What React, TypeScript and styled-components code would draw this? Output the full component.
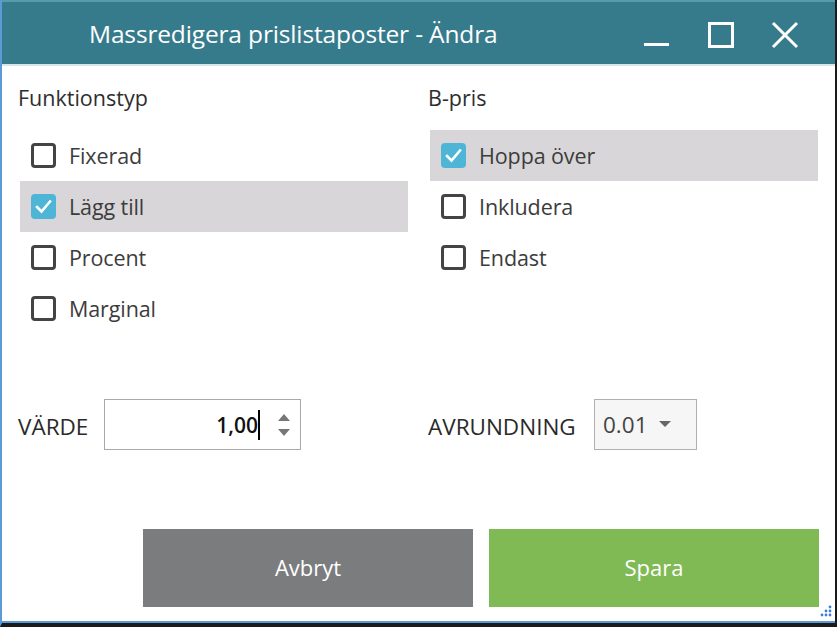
import React from "react";
import styled, { createGlobalStyle } from "styled-components";

const Global = createGlobalStyle`
  html, body { margin: 0; padding: 0; background: #ffffff; }
  body { font-family: "Open Sans", "Noto Sans", sans-serif; }
  * { box-sizing: border-box; }
`;

const Window = styled.div`
  position: relative;
  width: 837px;
  height: 627px;
  display: flex;
  flex-direction: column;
  background: #ffffff;
  border-left: 2px solid #5a9ad6;
  border-right: 2px solid #1b1b1b;
  border-bottom: 4px solid #1b1b1b;
  box-shadow: inset 0 -2px 0 #5a9ad6;
  overflow: hidden;
`;

const TitleBar = styled.div`
  height: 66px;
  flex: 0 0 66px;
  background: #367b8c;
  border-top: 2px solid #5a9ab0;
  border-bottom: 2px solid #d6e6ea;
  display: flex;
  align-items: center;
  padding-left: 87px;
  padding-right: 36px;
  color: #ffffff;
`;

const Title = styled.div`
  flex: 1;
  font-family: "Open Sans", sans-serif;
  font-size: 24.5px;
  font-weight: 400;
  letter-spacing: -0.15px;
`;

const Controls = styled.div`
  display: flex;
  align-items: center;
  gap: 36px;
  margin-top: 3px;
`;

const CtrlIcon = styled.svg`
  width: 28px;
  height: 28px;
  display: block;
`;

const Body = styled.div`
  flex: 1;
  display: flex;
  flex-direction: column;
  padding: 19px 16px 0 16px;
`;

const Columns = styled.div`
  display: grid;
  grid-template-columns: 390px 390px;
  column-gap: 20px;
`;

const Column = styled.div`
  display: flex;
  flex-direction: column;
`;

const Heading = styled.div`
  font-size: 21.5px;
  line-height: 26px;
  color: #2e2e2e;
  margin-bottom: 19px;
`;

const List = styled.div`
  display: flex;
  flex-direction: column;
  margin-left: 2px;
`;

const Row = styled.div<{ $active?: boolean }>`
  height: 51px;
  display: flex;
  align-items: center;
  gap: 13px;
  padding-left: 11px;
  background: ${(p) => (p.$active ? "#d8d6d8" : "transparent")};
`;

const Box = styled.div<{ $checked?: boolean }>`
  width: 25px;
  height: 25px;
  border-radius: 4px;
  border: ${(p) => (p.$checked ? "none" : "3px solid #444444")};
  background: ${(p) => (p.$checked ? "#4eb5d6" : "#ffffff")};
  display: flex;
  align-items: center;
  justify-content: center;
`;

const Label = styled.span`
  font-size: 21.5px;
  color: #3c3c3c;
  letter-spacing: -0.1px;
`;

const FieldRow = styled.div`
  display: grid;
  grid-template-columns: 390px 390px;
  column-gap: 20px;
  margin-top: 65px;
`;

const Field = styled.div`
  display: flex;
  align-items: center;
  height: 51px;
`;

const FieldLabel = styled.span<{ $width: number }>`
  width: ${(p) => p.$width}px;
  font-size: 22.5px;
  color: #2a2a2a;
  margin-top: 4px;
`;

const NumberBox = styled.div`
  width: 197px;
  height: 51px;
  border: 1px solid #a9a9a9;
  display: flex;
  align-items: center;
  justify-content: flex-end;
  padding-right: 9px;
`;

const NumberValue = styled.span`
  font-size: 21px;
  font-weight: 600;
  color: #111111;
  display: flex;
  align-items: center;
`;

const Caret = styled.span`
  width: 2px;
  height: 30px;
  background: #000;
`;

const Spinner = styled.div`
  display: flex;
  flex-direction: column;
  gap: 8px;
  margin-left: 17px;
`;

const Select = styled.div`
  width: 103px;
  height: 51px;
  border: 1px solid #b0b0b0;
  background: #f6f6f6;
  display: flex;
  align-items: center;
  padding-left: 8px;
  gap: 11px;
  font-size: 22.5px;
  color: #444;
`;

const Buttons = styled.div`
  display: flex;
  gap: 16px;
  margin-top: 79px;
  padding-left: 125px;
`;

const Button = styled.div<{ $primary?: boolean }>`
  width: 331px;
  height: 78px;
  background: ${(p) => (p.$primary ? "#80ba55" : "#7b7c7e")};
  color: #ffffff;
  font-size: 22px;
  display: flex;
  align-items: center;
  justify-content: center;
  padding-bottom: 2px;
`;

const Grip = styled.svg`
  position: absolute;
  right: 2px;
  bottom: 4px;
  width: 14px;
  height: 14px;
`;

const Check = () => (
  <svg width="19" height="19" viewBox="0 0 19 19">
    <path d="M3 10 L7.5 14.5 L16 4.5" fill="none" stroke="#ffffff" strokeWidth="2.6" strokeLinecap="square" />
  </svg>
);

const Item = ({ label, checked }: { label: string; checked?: boolean }) => (
  <Row $active={checked}>
    <Box $checked={checked}>{checked && <Check />}</Box>
    <Label>{label}</Label>
  </Row>
);

export default function App() {
  return (
    <>
      <Global />
      <Window>
        <TitleBar>
          <Title>Massredigera prislistaposter - Ändra</Title>
          <Controls>
            <CtrlIcon viewBox="0 0 28 28">
              <rect x="1" y="22" width="25" height="3" fill="#fff" />
            </CtrlIcon>
            <CtrlIcon viewBox="0 0 28 28">
              <rect x="2.5" y="2.5" width="23" height="23" fill="none" stroke="#fff" strokeWidth="3" />
            </CtrlIcon>
            <CtrlIcon viewBox="0 0 28 28">
              <path d="M2 2 L26 26 M26 2 L2 26" stroke="#fff" strokeWidth="3" />
            </CtrlIcon>
          </Controls>
        </TitleBar>
        <Body>
          <Columns>
            <Column>
              <Heading>Funktionstyp</Heading>
              <List>
                <Item label="Fixerad" />
                <Item label="Lägg till" checked />
                <Item label="Procent" />
                <Item label="Marginal" />
              </List>
            </Column>
            <Column>
              <Heading>B-pris</Heading>
              <List>
                <Item label="Hoppa över" checked />
                <Item label="Inkludera" />
                <Item label="Endast" />
              </List>
            </Column>
          </Columns>
          <FieldRow>
            <Field>
              <FieldLabel $width={86}>VÄRDE</FieldLabel>
              <NumberBox>
                <NumberValue>
                  1,00
                  <Caret />
                </NumberValue>
                <Spinner>
                  <svg width="14" height="8" viewBox="0 0 14 8">
                    <path d="M1 8 L7 1 L13 8 Z" fill="#777" />
                  </svg>
                  <svg width="14" height="8" viewBox="0 0 14 8">
                    <path d="M1 0 L7 7 L13 0 Z" fill="#777" />
                  </svg>
                </Spinner>
              </NumberBox>
            </Field>
            <Field>
              <FieldLabel $width={166}>AVRUNDNING</FieldLabel>
              <Select>
                0.01
                <svg width="12" height="7" viewBox="0 0 12 7">
                  <path d="M0 0 L12 0 L6 6 Z" fill="#666" />
                </svg>
              </Select>
            </Field>
          </FieldRow>
          <Buttons>
            <Button>Avbryt</Button>
            <Button $primary>Spara</Button>
          </Buttons>
        </Body>
        <Grip viewBox="0 0 14 14">
          {[
            [11, 2],
            [7, 6],
            [11, 6],
            [3, 10],
            [7, 10],
            [11, 10],
          ].map(([x, y], i) => (
            <circle key={i} cx={x} cy={y} r="1.4" fill="#3a7fd5" />
          ))}
        </Grip>
      </Window>
    </>
  );
}
